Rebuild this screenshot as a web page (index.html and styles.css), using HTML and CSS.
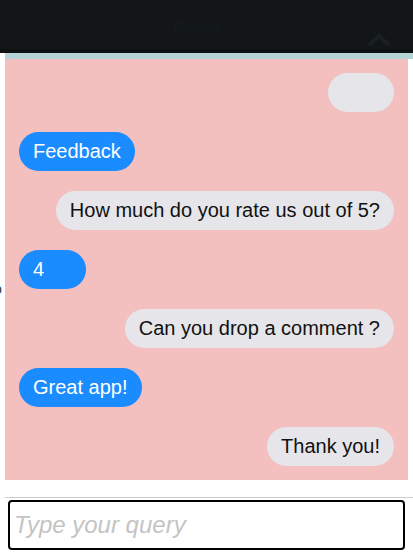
FILE: index.html
```html
<!DOCTYPE html>
<html>
<head>
<meta charset="utf-8">
<link rel="stylesheet" href="styles.css">
</head>
<body>
<header class="topbar">
  <span class="top-title">Chatbot</span>
  <svg class="top-chevron" width="24" height="14" viewBox="0 0 24 14"><path d="M2 12 L12 3 L22 12" fill="none" stroke="#1a1f21" stroke-width="4"/></svg>
</header>
<div class="accent"></div>
<main class="chat">
  <div class="msg bot empty"></div>
  <div class="msg user">Feedback</div>
  <div class="msg bot">How much do you rate us out of 5?</div>
  <div class="msg user num">4</div>
  <div class="msg bot">Can you drop a comment ?</div>
  <div class="msg user">Great app!</div>
  <div class="msg bot">Thank you!</div>
</main>
<span class="stray">o</span>
<div class="divider"></div>
<div class="input-row">
  <input class="query" type="text" placeholder="Type your query">
</div>
</body>
</html>
```
FILE: styles.css
```css
html, body {
  margin: 0;
  padding: 0;
  background: #ffffff;
  font-family: "Liberation Sans", Arial, sans-serif;
}
body {
  position: relative;
  width: 413px;
  overflow: hidden;
}
.topbar {
  height: 49px;
  background: #131617;
  border-bottom: 4px solid #0f1112;
  display: flex;
  align-items: center;
  justify-content: center;
  position: relative;
}
.top-title {
  color: #141c1a;
  font-size: 13px;
  margin-left: -20px;
  margin-top: 4px;
}
.top-chevron {
  position: absolute;
  right: 22px;
  bottom: 2px;
}
.accent {
  height: 6px;
  margin-left: 5px;
  background: #b4d4d6;
}
.chat {
  margin-left: 5px;
  width: 403px;
  box-sizing: border-box;
  background: #f4bfbf;
  padding: 14px;
  display: flex;
  flex-direction: column;
  gap: 20px;
}
.msg {
  font-size: 20px;
  line-height: 23px;
  padding: 8px 14px;
  border-radius: 20px;
  white-space: nowrap;
}
.msg.user {
  align-self: flex-start;
  background: #1a8cff;
  color: #ffffff;
}
.msg.bot {
  align-self: flex-end;
  background: #e5e5ea;
  color: #111111;
}
.msg.empty {
  width: 38px;
  height: 23px;
}
.msg.num {
  width: 39px;
}
.stray {
  position: absolute;
  left: -6px;
  top: 281px;
  font-size: 14px;
  color: #333333;
}
.divider {
  height: 1px;
  background: #cccccc;
  margin: 17px 0 0 5px;
}
.input-row {
  padding: 2px 8px 0 8px;
}
.query {
  box-sizing: border-box;
  width: 397px;
  height: 50px;
  border: 2px solid #000000;
  border-radius: 4px;
  padding: 0 4px;
  font-family: "Liberation Sans", Arial, sans-serif;
  font-size: 24px;
  outline: none;
  color: #111;
}
.query::placeholder {
  color: #c4c4c4;
  font-style: italic;
}
```
